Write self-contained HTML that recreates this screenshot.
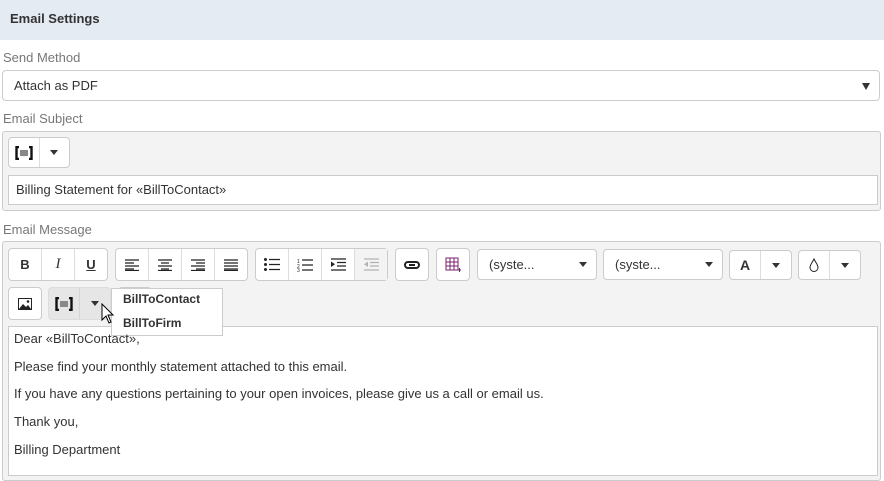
<!DOCTYPE html>
<html><head><style>
*{box-sizing:border-box;margin:0;padding:0}
body{width:884px;height:471px;overflow:hidden;background:#fff;font-family:"Liberation Sans",sans-serif;font-size:13px;color:#333;position:relative}
.a{position:absolute}
.lbl{color:#777;font-size:13px}
.btn{position:absolute;background:#fff;border:1px solid #ccc;border-radius:4px;height:33px;display:flex}
.btn>div{flex:1;display:flex;align-items:center;justify-content:center;border-left:1px solid #ddd;font-size:13px}
.btn>div:first-child{border-left:none}
.tri{width:0;height:0;border-left:4px solid transparent;border-right:4px solid transparent;border-top:5px solid #333}
.line{position:absolute;left:14px;font-size:13px;color:#333}
</style></head><body>
<div class="a" style="left:0;top:0;width:884px;height:40px;background:#e4ebf2"></div>
<div class="a" style="left:10px;top:11px;font-weight:bold;font-size:13px;color:#333">Email Settings</div>
<div class="a lbl" style="left:3px;top:50px">Send Method</div>
<div class="a" style="left:2px;top:70px;width:878px;height:31px;border:1px solid #ccc;border-radius:4px"></div>
<div class="a" style="left:14px;top:78px">Attach as PDF</div>
<div class="a tri" style="left:862px;top:83px;border-top-width:7px"></div>
<div class="a lbl" style="left:3px;top:111px">Email Subject</div>
<div class="a" style="left:2px;top:131px;width:879px;height:80px;background:#f3f3f3;border:1px solid #ccc;border-radius:3px"></div>
<div class="btn" style="left:8px;top:137px;width:62px;height:31px"><div><svg width="18" height="14" viewBox="0 0 18 14"><path d="M4 1H1.5V13H4M14 1h2.5V13H14" fill="none" stroke="#111" stroke-width="2.4"/><rect x="5" y="4" width="8" height="6" fill="#888"/></svg></div><div><span class="tri"></span></div></div>
<div class="a" style="left:8px;top:175px;width:870px;height:30px;background:#fff;border:1px solid #ccc"></div>
<div class="a" style="left:16px;top:182px">Billing Statement for «BillToContact»</div>
<div class="a lbl" style="left:3px;top:222px">Email Message</div>
<div class="a" style="left:2px;top:241px;width:879px;height:240px;background:#f3f3f3;border:1px solid #ccc;border-radius:3px"></div>
<div class="btn" style="left:8px;top:248px;width:100px"><div style="font-weight:bold">B</div><div style="font-style:italic;font-family:'Liberation Serif';font-size:15px">I</div><div style="text-decoration:underline;font-weight:bold">U</div></div>
<div class="btn" style="left:115px;top:248px;width:133px">
<div><svg width="14" height="12"><path d="M0 1h14M0 4h9M0 7h14M0 10h9M0 11.5h14" stroke="#222" stroke-width="1.2"/></svg></div>
<div><svg width="14" height="12"><path d="M0 1h14M3 4h8M0 7h14M3 10h8M0 11.5h14" stroke="#222" stroke-width="1.2"/></svg></div>
<div><svg width="14" height="12"><path d="M0 1h14M5 4h9M0 7h14M5 10h9M0 11.5h14" stroke="#222" stroke-width="1.2"/></svg></div>
<div><svg width="14" height="12"><path d="M0 1h14M0 4h14M0 7h14M0 10h14M0 11.5h14" stroke="#222" stroke-width="1.2"/></svg></div></div>
<div class="btn" style="left:255px;top:248px;width:133px">
<div><svg width="16" height="13"><circle cx="1.5" cy="1.5" r="1.5" fill="#222"/><circle cx="1.5" cy="6.5" r="1.5" fill="#222"/><circle cx="1.5" cy="11.5" r="1.5" fill="#222"/><path d="M5 1.5h11M5 6.5h11M5 11.5h11" stroke="#222" stroke-width="1.3"/></svg></div>
<div><svg width="16" height="14"><text x="0" y="5" font-size="5" fill="#222" font-family="Liberation Sans">1</text><text x="0" y="10" font-size="5" fill="#222" font-family="Liberation Sans">2</text><text x="0" y="14" font-size="5" fill="#222" font-family="Liberation Sans">3</text><path d="M5 2h11M5 7h11M5 12h11" stroke="#222" stroke-width="1.3"/></svg></div>
<div><svg width="15" height="13"><path d="M0 1h15M6 4.5h9M6 8h9M0 12h15" stroke="#222" stroke-width="1.3"/><path d="M0 3.5L4 6.3L0 9z" fill="#222"/></svg></div>
<div style="background:#f3f3f3"><svg width="15" height="13" opacity=".3"><path d="M0 1h15M6 4.5h9M6 8h9M0 12h15" stroke="#222" stroke-width="1.3"/><path d="M4 3.5L0 6.3L4 9z" fill="#222"/></svg></div></div>
<div class="btn" style="left:395px;top:248px;width:34px"><div><svg width="16" height="8"><rect x="1" y="1" width="14" height="6" rx="3" fill="none" stroke="#222" stroke-width="2"/><path d="M5 4h6" stroke="#222" stroke-width="2"/></svg></div></div>
<div class="btn" style="left:436px;top:248px;width:34px"><div><svg width="16" height="16"><path d="M1 1h12v12H1zM1 5h12M1 9h12M5 1v12M9 1v12" fill="none" stroke="#7a1f6a" stroke-width="1"/><path d="M12.5 13h4M14.5 11v4" stroke="#7a1f6a"/></svg></div></div>
<div class="btn" style="left:477px;top:249px;width:120px;height:31px"><div style="justify-content:flex-start;padding-left:11px;flex:3;color:#333">(syste...</div><div style="border:none"><span class="tri"></span></div></div>
<div class="btn" style="left:603px;top:249px;width:120px;height:31px"><div style="justify-content:flex-start;padding-left:11px;flex:3;color:#333">(syste...</div><div style="border:none"><span class="tri"></span></div></div>
<div class="btn" style="left:729px;top:250px;width:63px;height:30px"><div style="font-weight:bold;font-size:14px">A</div><div><span class="tri"></span></div></div>
<div class="btn" style="left:798px;top:250px;width:63px;height:30px"><div><svg width="10" height="14"><path d="M5 1C3 5 1 7 1 9.5a4 4 0 0 0 8 0C9 7 7 5 5 1z" fill="none" stroke="#222" stroke-width="1"/></svg></div><div><span class="tri"></span></div></div>
<div class="btn" style="left:8px;top:287px;width:34px"><div><svg width="14" height="12"><rect x="0.5" y="0.5" width="13" height="11" fill="none" stroke="#222"/><path d="M1 11L5 6L8 9L10 7L13 11Z" fill="#222"/><circle cx="10" cy="3.5" r="1.3" fill="#222"/></svg></div></div>
<div class="btn" style="left:118px;top:287px;width:34px"></div>
<div class="btn" style="left:48px;top:287px;width:63px;background:#e6e6e6;border-color:#ddd"><div style="border:none"><svg width="18" height="14" viewBox="0 0 18 14"><path d="M4 1H1.5V13H4M14 1h2.5V13H14" fill="none" stroke="#111" stroke-width="2.4"/><rect x="5" y="4" width="8" height="6" fill="#888"/></svg></div><div style="border-left-color:#d5d5d5"><span class="tri"></span></div></div>
<div class="a" style="left:8px;top:326px;width:870px;height:150px;background:#fff;border:1px solid #ccc"></div>
<div class="a" style="left:111px;top:288px;width:112px;height:48px;background:#fff;border:1px solid #ccc"></div>
<div class="a" style="left:123px;top:292px;font-weight:bold;font-size:12px">BillToContact</div>
<div class="a" style="left:123px;top:316px;font-weight:bold;font-size:12px">BillToFirm</div>
<div class="line" style="top:331px">Dear «BillToContact»,</div>
<div class="line" style="top:359px">Please find your monthly statement attached to this email.</div>
<div class="line" style="top:386px">If you have any questions pertaining to your open invoices, please give us a call or email us.</div>
<div class="line" style="top:414px">Thank you,</div>
<div class="line" style="top:442px">Billing Department</div>
<svg class="a" style="left:101px;top:303px" width="14" height="22" viewBox="0 0 14 22"><path d="M1 1 L1 17 L5 13 L8 20 L10 19 L7 12 L12 12 Z" fill="#fff" stroke="#000" stroke-width="1"/></svg>
</body></html>
